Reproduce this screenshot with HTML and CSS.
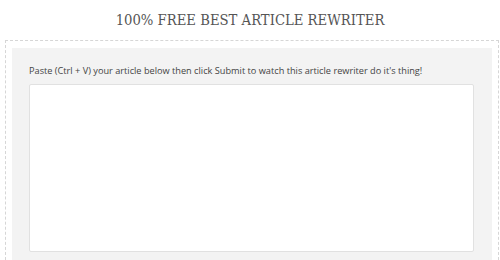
FILE: index.html
```html
<!DOCTYPE html>
<html>
<head>
<meta charset="utf-8">
<link rel="stylesheet" href="styles.css">
</head>
<body>
<h1 class="title">100% FREE BEST ARTICLE REWRITER</h1>
<div class="frame">
  <div class="panel">
    <p class="hint">Paste (Ctrl + V) your article below then click Submit to watch this article rewriter do it's thing!</p>
    <textarea class="input"></textarea>
  </div>
</div>
</body>
</html>
```
FILE: styles.css
```css
html, body {
  margin: 0;
  padding: 0;
  background: #ffffff;
  overflow: hidden;
}
body {
  width: 500px;
  height: 260px;
}
.title {
  margin: 0;
  padding-top: 11px;
  height: 29px;
  box-sizing: border-box;
  text-align: center;
  font-family: "DejaVu Serif Condensed", "DejaVu Serif", serif;
  font-weight: normal;
  font-size: 14.7px;
  line-height: 17px;
  color: #555555;
}
.frame {
  margin: 11px 1px 0 5px;
  border: 1px dashed #d6d6d6;
  border-bottom: none;
  padding: 7px 6px 0 6px;
  height: 212px;
  overflow: hidden;
}
.panel {
  background: #f3f3f3;
  padding: 16px 18px 0 17px;
  height: 212px;
  box-sizing: border-box;
  display: flex;
  flex-direction: column;
}
.hint {
  margin: 0;
  font-family: "Open Sans", sans-serif;
  font-size: 9.2px;
  line-height: 14px;
  color: #444444;
}
.input {
  margin-top: 6px;
  height: 168px;
  flex: none;
  box-sizing: border-box;
  border: 1px solid #e1e1e1;
  border-radius: 2px;
  background: #ffffff;
  resize: none;
  outline: none;
  width: 100%;
}
```
